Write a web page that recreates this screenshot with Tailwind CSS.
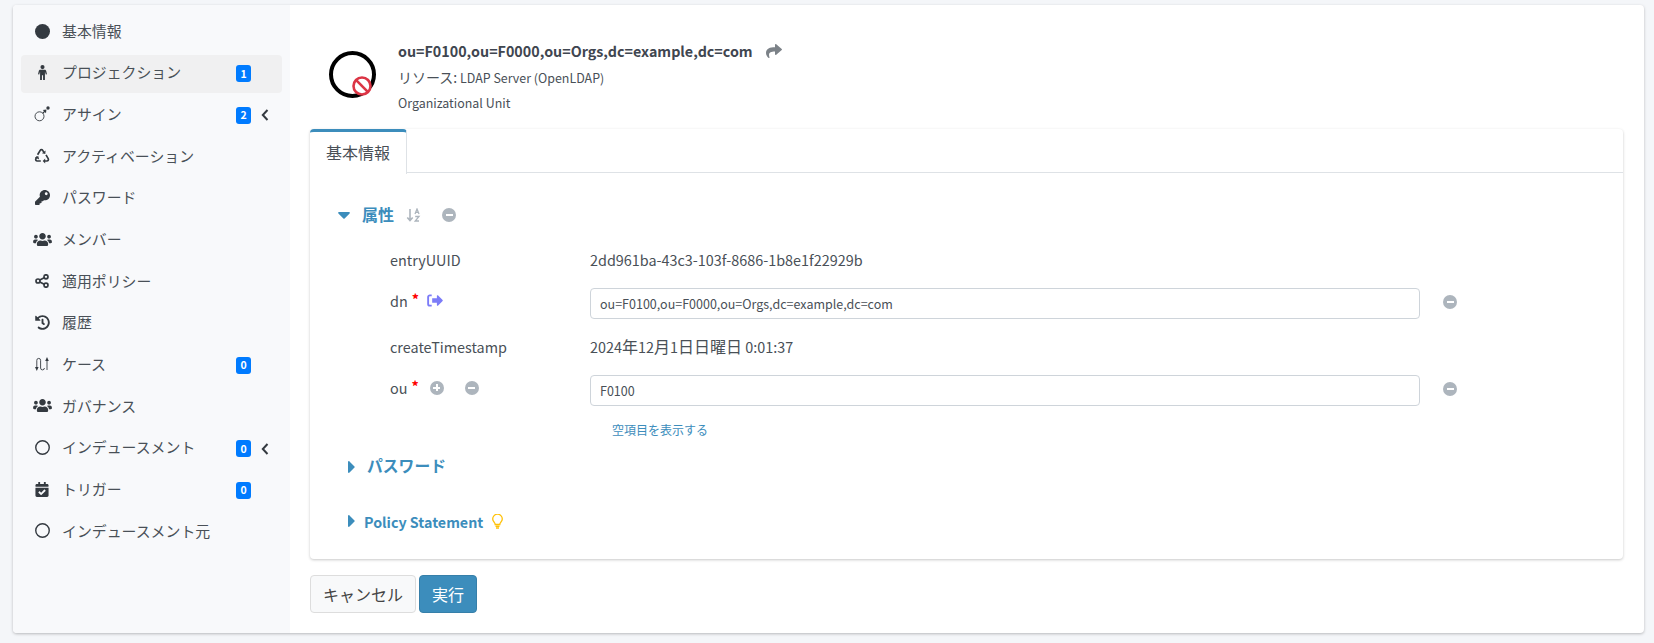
<!DOCTYPE html>
<html lang="ja">
<head>
  <meta charset="UTF-8" />
  <title>基本情報</title>
  <script src="https://cdn.jsdelivr.net/npm/@tailwindcss/browser@4"></script>
</head>
<body class="bg-[#f4f6f9] h-screen overflow-hidden font-['Noto_Sans_CJK_JP','Noto_Sans',sans-serif] text-[#495057]">

  <div class="ml-[13px] mr-[10px] mt-[5px] h-[628px] flex bg-white rounded-[4px] shadow-[0_1px_3px_rgba(0,0,0,0.25)] overflow-hidden">

    <!-- sidebar -->
    <aside class="w-[277px] shrink-0 bg-[#f8f9fb] px-2 pt-[8px] text-[14.9px]">
      <nav class="flex flex-col gap-[3.67px]">
        <a class="h-[38px] pb-[2px] flex items-center rounded-[4px]">
          <span class="w-[42px] flex justify-center"><svg class="w-[15px] h-[15px]" viewBox="0 0 16 16" fill="#343a40"><circle cx="8" cy="8" r="8"/></svg></span>
          <span class="-ml-px">基本情報</span>
        </a>
        <a class="h-[38px] pb-[2px] flex items-center rounded-[4px] bg-[#f0f0f1]">
          <span class="w-[42px] flex justify-center"><svg class="w-[15px] h-[15px]" viewBox="0 0 16 16" fill="#343a40"><circle cx="8" cy="2.2" r="2.2"/><path d="M5.6 5h4.8c.8 0 1.3.5 1.5 1.2l.9 3.6-1.3.3-.9-3v9.9H8.6V11H7.4v6H5.4V7.1l-.9 3-1.3-.3.9-3.6C4.3 5.500 4.800 5 5.600 5z"/></svg></span>
          <span class="-ml-px flex-1">プロジェクション</span>
          <span class="w-[15px] h-[17px] rounded-[3px] bg-[#007bff] text-white text-[10.5px] font-bold flex items-center justify-center mr-[31px] translate-y-px">1</span>
        </a>
        <a class="h-[38px] pb-[2px] flex items-center rounded-[4px]">
          <span class="w-[42px] flex justify-center"><svg class="w-[16px] h-[16px]" viewBox="0 0 16 16" fill="none" stroke="#343a40" stroke-width="0.9"><circle cx="5.500" cy="10.300" r="4.500"/><path d="M8.800 7.200l2.800-2.800" stroke-width="1.300"/><path d="M8.800 4l3.600-.4-.4 3.600z" fill="#343a40" stroke="none"/><circle cx="14" cy="2" r="1.700" fill="#343a40" stroke="none"/></svg></span>
          <span class="-ml-px flex-1">アサイン</span>
          <span class="w-[15px] h-[17px] rounded-[3px] bg-[#007bff] text-white text-[10.5px] font-bold flex items-center justify-center translate-y-px">2</span>
          <svg class="w-[8px] h-[12px] ml-[10px] mr-[13px] translate-y-px" viewBox="0 0 8 12" fill="none" stroke="#343a40" stroke-width="2"><path d="M6.500 1L1.800 6l4.700 5"/></svg>
        </a>
        <a class="h-[38px] pb-[2px] flex items-center rounded-[4px]">
          <span class="w-[42px] flex justify-center"><svg class="w-[16px] h-[16px]" viewBox="0 0 16 16" fill="none" stroke="#343a40" stroke-width="1.700"><path d="M3.600 6.800l2.600-4.400c.6-1 1.900-1 2.500 0l1.200 2"/><path d="M11.600 2.500l-.3 3.600-3.400-.8z" fill="#343a40" stroke="none"/><path d="M12 6.800l2.200 3.900c.6 1.100-.1 2.300-1.300 2.300h-2.400"/><path d="M11.200 10.500l-2.500 2.500 2.500 2.500z" fill="#343a40" stroke="none"/><path d="M6.800 13H3.200c-1.200 0-1.900-1.200-1.300-2.300l1.100-2"/><path d="M.9 9.600l3.300-1.700 1 3.500z" fill="#343a40" stroke="none"/></svg></span>
          <span class="-ml-px">アクティベーション</span>
        </a>
        <a class="h-[38px] pb-[2px] flex items-center rounded-[4px]">
          <span class="w-[42px] flex justify-center"><svg class="w-[15px] h-[15px]" viewBox="0 0 512 512" fill="#343a40"><path d="M512 176.001C512 273.203 433.202 352 336 352c-11.22 0-22.19-1.062-32.827-3.069l-24.012 27.014A23.999 23.999 0 0 1 261.223 384H224v40c0 13.255-10.745 24-24 24h-40v40c0 13.255-10.745 24-24 24H24c-13.255 0-24-10.745-24-24v-78.059c0-6.365 2.529-12.47 7.029-16.971l161.802-161.802C163.108 213.814 160 195.271 160 176 160 78.798 238.797.001 335.999 0 433.488-.001 512 78.511 512 176.001zM336 128c0 26.51 21.49 48 48 48s48-21.49 48-48-21.49-48-48-48-48 21.49-48 48z"/></svg></span>
          <span class="-ml-px">パスワード</span>
        </a>
        <a class="h-[38px] pb-[2px] flex items-center rounded-[4px]">
          <span class="w-[42px] flex justify-center"><svg class="w-[19px] h-[15px]" viewBox="0 0 640 512" fill="#343a40"><path d="M96 224c35.3 0 64-28.7 64-64s-28.7-64-64-64-64 28.7-64 64 28.7 64 64 64zm448 0c35.3 0 64-28.7 64-64s-28.7-64-64-64-64 28.7-64 64 28.700 64 64 64zm32 32h-64c-17.600 0-33.500 7.100-45.100 18.600 40.300 22.100 68.900 62 75.100 109.400h66c17.700 0 32-14.300 32-32v-32c0-35.300-28.700-64-64-64zm-256 0c61.900 0 112-50.100 112-112S381.900 32 320 32 208 82.100 208 144s50.100 112 112 112zm76.800 32h-8.300c-20.800 10-43.900 16-68.500 16s-47.600-6-68.500-16h-8.300C179.600 288 128 339.600 128 403.200V432c0 26.500 21.500 48 48 48h288c26.500 0 48-21.500 48-48v-28.800c0-63.600-51.600-115.200-115.200-115.200zm-223.700-13.400C161.500 263.100 145.600 256 128 256H64c-35.300 0-64 28.700-64 64v32c0 17.700 14.300 32 32 32h65.900c6.300-47.400 34.900-87.300 75.200-109.400z"/></svg></span>
          <span class="-ml-px">メンバー</span>
        </a>
        <a class="h-[38px] pb-[2px] flex items-center rounded-[4px]">
          <span class="w-[42px] flex justify-center"><svg class="w-[14px] h-[14px]" viewBox="0 0 14 14" fill="none" stroke="#343a40" stroke-width="1.700"><circle cx="3" cy="7" r="2"/><circle cx="11" cy="2.800" r="2"/><circle cx="11" cy="11.200" r="2"/><path d="M4.800 6l4.400-2.200M4.800 8l4.400 2.200"/></svg></span>
          <span class="-ml-px">適用ポリシー</span>
        </a>
        <a class="h-[38px] pb-[2px] flex items-center rounded-[4px]">
          <span class="w-[42px] flex justify-center"><svg class="w-[15px] h-[15px]" viewBox="0 0 512 512" fill="#343a40"><path d="M504 255.531c.253 136.640-111.180 248.372-247.820 248.468-59.015.042-113.223-20.530-155.822-54.911-11.077-8.940-11.905-25.541-1.839-35.607l11.267-11.267c8.609-8.609 22.353-9.551 31.891-1.984C173.062 425.135 212.781 440 256 440c101.705 0 184-82.311 184-184 0-101.705-82.311-184-184-184-48.814 0-93.149 18.969-126.068 49.932l50.754 50.754c10.080 10.080 2.941 27.314-11.313 27.314H24c-8.837 0-16-7.163-16-16V38.627c0-14.254 17.234-21.393 27.314-11.314l49.372 49.372C129.209 34.136 189.552 8 256 8c136.810 0 247.747 110.780 248 247.531zm-180.912 78.784l9.823-12.630c8.138-10.463 6.253-25.542-4.210-33.679L288 256.349V152c0-13.255-10.745-24-24-24h-16c-13.255 0-24 10.745-24 24v135.651l65.409 50.874c10.463 8.137 25.541 6.253 33.679-4.210z"/></svg></span>
          <span class="-ml-px">履歴</span>
        </a>
        <a class="h-[38px] pb-[2px] flex items-center rounded-[4px]">
          <span class="w-[42px] flex justify-center"><svg class="w-[14px] h-[14px]" viewBox="0 0 14 14" fill="none" stroke="#343a40" stroke-width="0.9"><path d="M1.800 11V3.300a1.900 1.900 0 0 1 3.800 0V11a1.900 1.900 0 0 0 3.800 0"/><path d="M12 13V3"/><path d="M0 10h3.600l-1.800 4zM10.200 4h3.600L12 0z" fill="#343a40" stroke="none"/></svg></span>
          <span class="-ml-px flex-1">ケース</span>
          <span class="w-[15px] h-[17px] rounded-[3px] bg-[#007bff] text-white text-[10.5px] font-bold flex items-center justify-center mr-[31px] translate-y-px">0</span>
        </a>
        <a class="h-[38px] pb-[2px] flex items-center rounded-[4px]">
          <span class="w-[42px] flex justify-center"><svg class="w-[19px] h-[15px]" viewBox="0 0 640 512" fill="#343a40"><path d="M96 224c35.300 0 64-28.700 64-64s-28.700-64-64-64-64 28.700-64 64 28.700 64 64 64zm448 0c35.300 0 64-28.700 64-64s-28.700-64-64-64-64 28.700-64 64 28.700 64 64 64zm32 32h-64c-17.600 0-33.500 7.100-45.100 18.600 40.300 22.100 68.900 62 75.100 109.400h66c17.700 0 32-14.300 32-32v-32c0-35.300-28.700-64-64-64zm-256 0c61.900 0 112-50.100 112-112S381.900 32 320 32 208 82.100 208 144s50.100 112 112 112zm76.800 32h-8.300c-20.800 10-43.900 16-68.500 16s-47.600-6-68.500-16h-8.300C179.600 288 128 339.600 128 403.200V432c0 26.500 21.500 48 48 48h288c26.500 0 48-21.500 48-48v-28.800c0-63.600-51.600-115.200-115.200-115.200zm-223.700-13.400C161.500 263.100 145.600 256 128 256H64c-35.300 0-64 28.700-64 64v32c0 17.700 14.300 32 32 32h65.900c6.300-47.400 34.900-87.300 75.200-109.400z"/></svg></span>
          <span class="-ml-px">ガバナンス</span>
        </a>
        <a class="h-[38px] pb-[2px] flex items-center rounded-[4px]">
          <span class="w-[42px] flex justify-center"><svg class="w-[15px] h-[15px]" viewBox="0 0 16 16" fill="none" stroke="#343a40" stroke-width="1.500"><circle cx="8" cy="8" r="7.200"/></svg></span>
          <span class="-ml-px flex-1">インデュースメント</span>
          <span class="w-[15px] h-[17px] rounded-[3px] bg-[#007bff] text-white text-[10.5px] font-bold flex items-center justify-center translate-y-px">0</span>
          <svg class="w-[8px] h-[12px] ml-[10px] mr-[13px] translate-y-px" viewBox="0 0 8 12" fill="none" stroke="#343a40" stroke-width="2"><path d="M6.500 1L1.800 6l4.700 5"/></svg>
        </a>
        <a class="h-[38px] pb-[2px] flex items-center rounded-[4px]">
          <span class="w-[42px] flex justify-center"><svg class="w-[14px] h-[15px]" viewBox="0 0 448 512" fill="#343a40"><path d="M436 160H12c-6.627 0-12-5.373-12-12v-36c0-26.510 21.490-48 48-48h48V12c0-6.627 5.373-12 12-12h40c6.627 0 12 5.373 12 12v52h128V12c0-6.627 5.373-12 12-12h40c6.627 0 12 5.373 12 12v52h48c26.510 0 48 21.490 48 48v36c0 6.627-5.373 12-12 12zM12 192h424c6.627 0 12 5.373 12 12v260c0 26.510-21.490 48-48 48H48c-26.510 0-48-21.490-48-48V204c0-6.627 5.373-12 12-12zm333.296 95.947l-28.169-28.398c-4.667-4.705-12.265-4.736-16.970-.068L194.120 364.665l-45.980-46.352c-4.667-4.705-12.266-4.736-16.971-.068l-28.397 28.170c-4.705 4.667-4.736 12.265-.068 16.970l82.601 83.269c4.667 4.705 12.265 4.736 16.970.068l142.953-141.805c4.705-4.667 4.736-12.265.068-16.970z"/></svg></span>
          <span class="-ml-px flex-1">トリガー</span>
          <span class="w-[15px] h-[17px] rounded-[3px] bg-[#007bff] text-white text-[10.5px] font-bold flex items-center justify-center mr-[31px] translate-y-px">0</span>
        </a>
        <a class="h-[38px] pb-[2px] flex items-center rounded-[4px]">
          <span class="w-[42px] flex justify-center"><svg class="w-[15px] h-[15px]" viewBox="0 0 16 16" fill="none" stroke="#343a40" stroke-width="1.500"><circle cx="8" cy="8" r="7.200"/></svg></span>
          <span class="-ml-px">インデュースメント元</span>
        </a>
      </nav>
    </aside>

    <!-- main -->
    <main class="flex-1 pl-[20px] pr-[21px]">

      <header class="h-[124px] flex items-start pt-[35px]">
        <div class="relative w-[69px] shrink-0 ml-[19px] mt-[11px]">
          <svg class="w-[47px] h-[47px]" viewBox="0 0 47 47" fill="none" stroke="#000" stroke-width="4"><circle cx="23.500" cy="23.500" r="21.500"/></svg>
          <svg class="absolute left-[23px] top-[25px] w-[20px] h-[20px]" viewBox="0 0 20 20" fill="#fff" stroke="#dc3545" stroke-width="2.600"><circle cx="10" cy="10" r="8.500"/><path d="M4.200 4.200l11.600 11.600"/></svg>
        </div>
        <div>
          <div class="flex items-center h-[22px]">
            <span class="text-[14.3px] font-bold text-[#3f4650]">ou=F0100,ou=F0000,ou=Orgs,dc=example,dc=com</span>
            <svg class="w-[16px] h-[16px] ml-[13px]" viewBox="0 0 512 512" fill="#7c8288"><path d="M503.691 189.836L327.687 37.851C312.281 24.546 288 35.347 288 56.015v80.053C127.371 137.907 0 170.100 0 322.326c0 61.441 39.581 122.309 83.333 154.132 13.653 9.931 33.111-2.533 28.077-18.631C66.066 312.814 132.917 274.316 288 272.085V360c0 20.700 24.300 31.453 39.687 18.164l176.004-152c11.071-9.562 11.086-26.753 0-36.328z"/></svg>
          </div>
          <div class="text-[12.45px] h-[20px] leading-[20px] mt-[5px]"><span class="text-[14px]">リソース:</span> LDAP Server (OpenLDAP)</div>
          <div class="text-[12.45px] h-[20px] leading-[20px] mt-[6px]">Organizational Unit</div>
        </div>
      </header>

      <section class="h-[430px] bg-white rounded-[4px] shadow-[0_1px_3px_rgba(0,0,0,0.22)]">
        <div class="h-[44px] border-b border-[#dee2e6] flex">
          <div class="w-[97px] h-[45px] pb-[3px] bg-white border-t-[3px] border-t-[#3c8dbc] border-r border-r-[#dee2e6] rounded-t-[4px] flex items-center justify-center text-[16px]">基本情報</div>
        </div>

        <div class="pt-[28px]">
          <div class="flex items-center h-[28px] pl-[28px]">
            <svg class="w-[12px] h-[7px]" viewBox="0 0 12 7" fill="#3c8dbc"><path d="M1 0h10c.8 0 1.200.9.6 1.500L6.600 6.500c-.3.3-.9.3-1.200 0L.4 1.500C-.2.900.2 0 1 0z"/></svg>
            <span class="ml-[12px] text-[16px] font-bold text-[#3c8dbc] -translate-y-px">属性</span>
            <svg class="w-[15px] h-[14px] ml-[12px]" viewBox="0 0 15 14" fill="none" stroke="#adb5bd" stroke-width="1.600"><path d="M4 1v11M1.300 9.500L4 12.500l2.700-3"/><path d="M9 6l2-5 2 5M9.700 4.300h2.600M9.200 8.500H13L9.200 13H13" stroke-width="1.300"/></svg>
            <span class="w-[14px] h-[14px] ml-[21px] rounded-full bg-[#adb5bd] flex items-center justify-center"><span class="w-[7px] h-[2px] bg-white"></span></span>
          </div>

          <div class="grid grid-cols-[200px_830px_auto] items-start pl-[80px] mt-[15px] text-[14.4px]">
            <div class="h-[31px] leading-[31px]">entryUUID</div>
            <div class="h-[31px] leading-[31px] col-span-2">2dd961ba-43c3-103f-8686-1b8e1f22929b</div>

            <div class="flex items-center h-[31px] mt-[13px] -translate-y-[3px]">dn<span class="text-[#ff0000] font-bold ml-[4px] -mt-[3px]">*</span>
              <svg class="w-[16px] h-[13px] ml-[8px]" viewBox="0 0 17 13" fill="none" stroke="#7c7cf8" stroke-width="2"><path d="M5 1H3a1.800 1.800 0 0 0-1.800 1.800v7.400A1.800 1.800 0 0 0 3 12h2"/><path d="M5.500 4.200h5V1.500c0-.6.600-.9 1.100-.5l5 5c.3.300.3.700 0 1l-5 5c-.5.400-1.100.1-1.100-.5V8.800h-5z" fill="#7c7cf8" stroke="none"/></svg>
            </div>
            <input class="h-[31px] mt-[13px] w-[830px] border border-[#ced4da] rounded-[4px] px-[9px] text-[12.5px] text-[#495057] outline-none" value="ou=F0100,ou=F0000,ou=Orgs,dc=example,dc=com" />
            <span class="w-[14px] h-[14px] ml-[23px] mt-[20px] rounded-full bg-[#adb5bd] flex items-center justify-center"><span class="w-[7px] h-[2px] bg-white"></span></span>

            <div class="h-[31px] leading-[31px] mt-[12px]">createTimestamp</div>
            <div class="h-[31px] leading-[31px] mt-[12px] col-span-2">2024<span class="text-[16px]">年</span>12<span class="text-[16px]">月</span>1<span class="text-[16px]">日日曜日</span> 0:01:37</div>

            <div class="flex items-center h-[31px] mt-[12px] -translate-y-[2px]">ou<span class="text-[#ff0000] font-bold ml-[4px] -mt-[3px]">*</span>
              <span class="w-[14px] h-[14px] ml-[11px] rounded-full bg-[#adb5bd] relative flex items-center justify-center"><span class="w-[7px] h-[2px] bg-white"></span><span class="absolute w-[2px] h-[7px] bg-white"></span></span>
              <span class="w-[14px] h-[14px] ml-[21px] rounded-full bg-[#adb5bd] flex items-center justify-center"><span class="w-[7px] h-[2px] bg-white"></span></span>
            </div>
            <input class="h-[31px] mt-[13px] w-[830px] border border-[#ced4da] rounded-[4px] px-[9px] text-[12.5px] text-[#495057] outline-none" value="F0100" />
            <span class="w-[14px] h-[14px] ml-[23px] mt-[20px] rounded-full bg-[#adb5bd] flex items-center justify-center"><span class="w-[7px] h-[2px] bg-white"></span></span>

            <div></div>
            <a class="col-span-2 mt-[14px] ml-[22px] text-[12px] leading-[20px] text-[#3c8dbc]">空項目を表示する</a>
          </div>

          <div class="flex items-center h-[28px] pl-[38px] mt-[12px]">
            <svg class="w-[7px] h-[12px] translate-y-px" viewBox="0 0 7 12" fill="#3c8dbc"><path d="M0 1c0-.8.9-1.200 1.500-.6l5 5c.3.3.3.9 0 1.200l-5 5C.9 12.200 0 11.800 0 11z"/></svg>
            <span class="ml-[12px] text-[15.8px] font-bold text-[#3c8dbc]">パスワード</span>
          </div>

          <div class="flex items-center h-[28px] pl-[38px] mt-[28px]">
            <svg class="w-[7px] h-[12px] -translate-y-px" viewBox="0 0 7 12" fill="#3c8dbc"><path d="M0 1c0-.8.9-1.200 1.500-.6l5 5c.3.3.3.9 0 1.200l-5 5C.9 12.200 0 11.800 0 11z"/></svg>
            <span class="ml-[9px] text-[14.25px] font-bold text-[#3c8dbc]">Policy Statement</span>
            <svg class="w-[11px] h-[15px] ml-[9px] -translate-y-px" viewBox="0 0 11 15" fill="none" stroke="#ffc107" stroke-width="1.300"><path d="M3.200 10.500c0-1.800-2.500-3-2.500-5.500a4.800 4.800 0 0 1 9.600 0c0 2.500-2.500 3.700-2.500 5.500z"/><path d="M3.500 12.300h4M4 14h3" stroke-width="1.600"/></svg>
          </div>
        </div>
      </section>

      <div class="flex gap-[3px] mt-[16px]">
        <button class="w-[106px] h-[38px] bg-[#f8f9fa] border border-[#ddd] rounded-[4px] text-[16px] text-[#444]">キャンセル</button>
        <button class="w-[58px] h-[38px] bg-[#3c8dbc] border border-[#367fa9] rounded-[4px] text-[16px] text-white">実行</button>
      </div>
    </main>
  </div>
</body>
</html>
